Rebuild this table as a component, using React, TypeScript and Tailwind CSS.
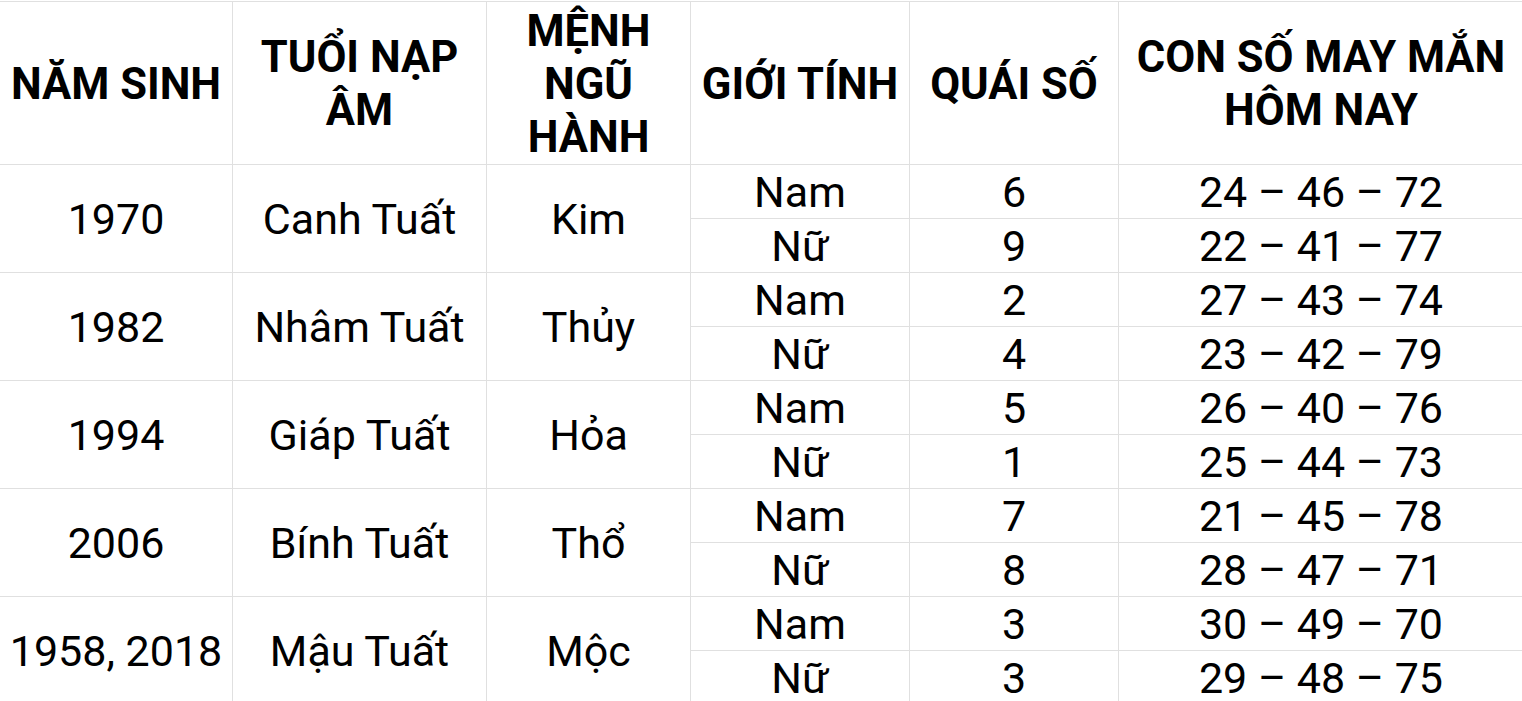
import React from "react";

type Group = {
  year: string;
  tuoi: string;
  menh: string;
  rows: { gt: string; qs: string; so: string }[];
};

const data: Group[] = [
  { year: "1970", tuoi: "Canh Tuất", menh: "Kim", rows: [
    { gt: "Nam", qs: "6", so: "24 – 46 – 72" },
    { gt: "Nữ", qs: "9", so: "22 – 41 – 77" },
  ]},
  { year: "1982", tuoi: "Nhâm Tuất", menh: "Thủy", rows: [
    { gt: "Nam", qs: "2", so: "27 – 43 – 74" },
    { gt: "Nữ", qs: "4", so: "23 – 42 – 79" },
  ]},
  { year: "1994", tuoi: "Giáp Tuất", menh: "Hỏa", rows: [
    { gt: "Nam", qs: "5", so: "26 – 40 – 76" },
    { gt: "Nữ", qs: "1", so: "25 – 44 – 73" },
  ]},
  { year: "2006", tuoi: "Bính Tuất", menh: "Thổ", rows: [
    { gt: "Nam", qs: "7", so: "21 – 45 – 78" },
    { gt: "Nữ", qs: "8", so: "28 – 47 – 71" },
  ]},
  { year: "1958, 2018", tuoi: "Mậu Tuất", menh: "Mộc", rows: [
    { gt: "Nam", qs: "3", so: "30 – 49 – 70" },
    { gt: "Nữ", qs: "3", so: "29 – 48 – 75" },
  ]},
];

const cell = "bg-white flex items-center justify-center text-center whitespace-nowrap text-[43px] pt-[2px]";
const head = "bg-white flex items-center justify-center text-center font-bold whitespace-nowrap text-[43.5px] pt-[2px]";

export default function App() {
  return (
    <div
      className="bg-white pt-px w-[1522px] h-[701px] overflow-hidden text-black leading-[53px]"
      style={{ fontFamily: "Roboto, 'Liberation Sans', sans-serif" }}
    >
      <div className="grid grid-cols-[232px_253px_203px_218px_208px_420px] grid-rows-[162px_repeat(10,53px)] gap-px bg-[#e0e0e0] pt-px">
        <div className={head}>NĂM SINH</div>
        <div className={head}>TUỔI NẠP<br />ÂM</div>
        <div className={head}>MỆNH<br />NGŨ<br />HÀNH</div>
        <div className={head}>GIỚI TÍNH</div>
        <div className={head}>QUÁI SỐ</div>
        <div className={head + " pr-[16px]"}>CON SỐ MAY MẮN<br />HÔM NAY</div>
        {data.map((g) => (
          <React.Fragment key={g.year}>
            <div className={cell + " row-span-2"}>{g.year}</div>
            <div className={cell + " row-span-2"}>{g.tuoi}</div>
            <div className={cell + " row-span-2"}>{g.menh}</div>
            <div className={cell}>{g.rows[0].gt}</div>
            <div className={cell}>{g.rows[0].qs}</div>
            <div className={cell + " pr-[16px]"}>{g.rows[0].so}</div>
            <div className={cell}>{g.rows[1].gt}</div>
            <div className={cell}>{g.rows[1].qs}</div>
            <div className={cell + " pr-[16px]"}>{g.rows[1].so}</div>
          </React.Fragment>
        ))}
      </div>
    </div>
  );
}
